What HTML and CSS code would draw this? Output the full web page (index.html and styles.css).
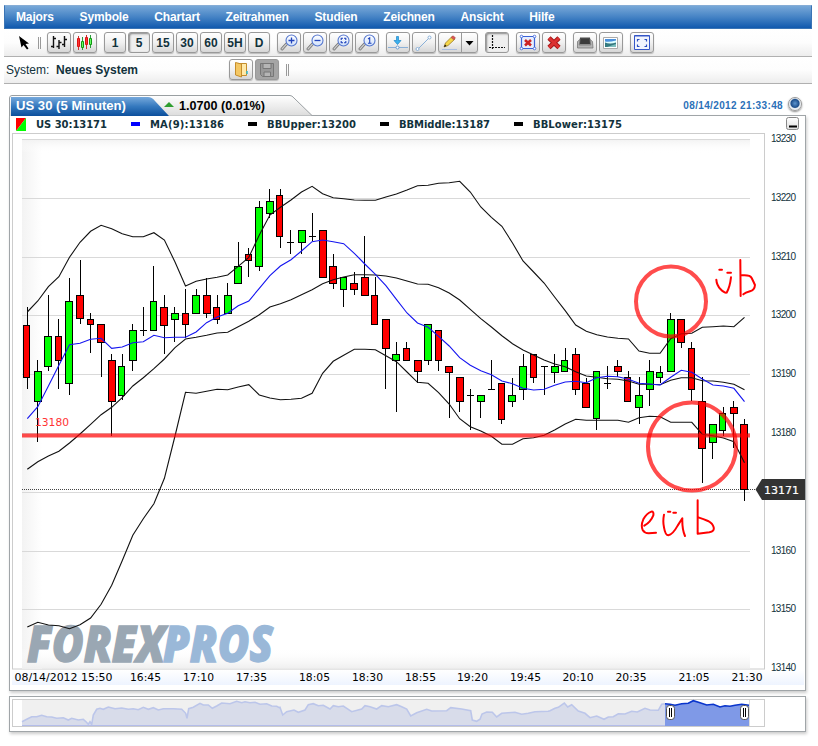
FILE: index.html
```html
<!DOCTYPE html>
<html lang="de">
<head>
<meta charset="utf-8">
<title>US 30 (5 Minuten)</title>
<link rel="stylesheet" href="styles.css">
</head>
<body>
<nav class="menu"><span>Majors</span><span>Symbole</span><span>Chartart</span><span>Zeitrahmen</span><span>Studien</span><span>Zeichnen</span><span>Ansicht</span><span>Hilfe</span></nav>

<div class="bar tools">
  <svg class="cursor" width="12" height="16" viewBox="0 0 12 16"><path d="M1 1L3.500 12.500 5.500 10 9 14.500 10.500 13.500 7.500 9 11 8.500Z" fill="#000"/></svg>
  <i class="grip"></i>
  <div class="group">
    <button class="btn"><svg viewBox="0 0 24 21"><path d="M6.500 4V16M4 14.500H6.500M6.500 6.500H9M12 8V17M9.500 14.500H12M12 10.500H14.500M17.500 4V15M15 12.500H17.500M17.500 7.500H20" stroke="#111" stroke-width="1.400" fill="none"/></svg></button>
    <button class="btn"><svg viewBox="0 0 24 21"><path d="M5.500 4V18M13.500 3V17" stroke="#c33"/><path d="M9.500 5V18M17.500 3V16" stroke="#2a9a3a"/><path d="M4.500 6.500h2v8h-2zM12.500 5.500h2v7h-2z" fill="#f33" stroke="#d11"/><path d="M8.500 9.500h2v6h-2zM16.500 6.500h2v6h-2z" fill="#6f6" stroke="#191"/></svg></button>
  </div>
  <div class="group">
    <button class="btn num">1</button><button class="btn num on">5</button><button class="btn num">15</button><button class="btn num">30</button><button class="btn num">60</button><button class="btn num">5H</button><button class="btn num">D</button>
  </div>
  <div class="group">
    <button class="btn"><svg viewBox="0 0 24 21"><use href="#lens"/><path d="M11.500 8.500h6M14.500 5.500v6" stroke="#24b" stroke-width="1.300"/></svg></button>
    <button class="btn"><svg viewBox="0 0 24 21"><use href="#lens"/><path d="M11.500 8.500h6" stroke="#24b" stroke-width="1.300"/></svg></button>
    <button class="btn"><svg viewBox="0 0 24 21"><use href="#lens"/><path d="M12.200 8V6.200h1.800M15 6.200h1.800v1.800M16.800 9v1.800h-1.800M14 10.800h-1.800v-1.800" fill="none" stroke="#24b" stroke-width="1.100"/></svg></button>
    <button class="btn"><svg viewBox="0 0 24 21"><use href="#lens"/><path d="M13 7l1.700-1.200V11M13 11.200h3.500" fill="none" stroke="#24b" stroke-width="1.100"/></svg></button>
  </div>
  <div class="group">
    <button class="btn"><svg viewBox="0 0 24 21"><path d="M2 15.500H22" stroke="#8ab0d8"/><circle cx="11.500" cy="15.500" r="1.500" fill="#fff" stroke="#6a9bd0"/><path d="M10.500 4.500h2v4h2.500l-3.500 4-3.500-4h2.500z" fill="#3bb0ee" stroke="#1b86c8" stroke-width=".7"/></svg></button>
    <button class="btn"><svg viewBox="0 0 24 21"><path d="M6 17L17 6" stroke="#8ab0d8"/><circle cx="5.500" cy="17" r="1.500" fill="#fff" stroke="#8ab0d8"/><circle cx="17.500" cy="5.500" r="1.500" fill="#fff" stroke="#8ab0d8"/></svg></button>
    <button class="btn wide"><svg class="pen" viewBox="0 0 40 21"><path d="M4 17.500H19" stroke="#a9bde0"/><path d="M6 15L7.500 11 14 4.500 17 7 10 13.500Z" fill="#f5d648" stroke="#9c7a22" stroke-width=".8"/><path d="M13 5.500l2-1.700 2.500 2-1.800 2z" fill="#d55" stroke="#944" stroke-width=".5"/><path d="M6 15l1-2.500 1.500 1.500z" fill="#111"/><path d="M23.500 0V21" stroke="#999"/><path d="M27.500 9h8l-4 4.500z" fill="#000"/></svg></button>
  </div>
  <div class="group"><button class="btn on"><svg viewBox="0 0 24 21"><path d="M7.500 3V18M4 15.500H20" stroke="#111" stroke-width="1.200" stroke-dasharray="2 1"/></svg></button></div>
  <div class="group">
    <button class="btn"><svg viewBox="0 0 24 21"><path d="M5.500 4.500h13v12h-13z" fill="#e7eefc" stroke="#3a62d8" stroke-width="1.200"/><path d="M9 8l6 5.500M15 8L9 13.500" stroke="#c22" stroke-width="2.600"/><g fill="#fff" stroke="#3a62d8" stroke-width=".8"><circle cx="5.500" cy="4.500" r="1.300"/><circle cx="18.500" cy="4.500" r="1.300"/><circle cx="5.500" cy="16.500" r="1.300"/><circle cx="18.500" cy="16.500" r="1.300"/></g></svg></button>
    <button class="btn"><svg viewBox="0 0 24 21"><path d="M7 6l10 9.500M17 6L7 15.500" stroke="#a11717" stroke-width="4.600"/><path d="M7 6l10 9.500M17 6L7 15.500" stroke="#dc3232" stroke-width="3"/></svg></button>
  </div>
  <div class="group">
    <button class="btn"><svg viewBox="0 0 24 21"><path d="M7 5.500h10l1 7H6z" fill="#4a4a4a"/><path d="M4.500 9.500l2.500-2-.8 5.500h11.600L17 7.500l2.500 2 .5 6.500h-15.500z" fill="#b5b5b5" stroke="#777" stroke-width=".8"/><path d="M8 7h8l.8 5H7.200z" fill="#3b3b3b"/></svg></button>
    <button class="btn"><svg viewBox="0 0 24 21"><path d="M4.500 5.500h14v11h-14z" fill="#fff" stroke="#aaa"/><path d="M6 7h11v4H6z" fill="#4a90dc"/><path d="M6 9.500q4 1 11-1V11H6z" fill="#dff"/><path d="M6 10.500q5 2 11 0V15H6z" fill="#357a80"/><path d="M8 15l9-3v3z" fill="#7fc0bf"/></svg></button>
  </div>
  <div class="group"><button class="btn"><svg viewBox="0 0 24 21"><path d="M4.500 3.500h15v14h-15z" fill="#f2f5fd" stroke="#3557c8"/><path d="M4.500 4h15" stroke="#3557c8"/><path d="M7.500 9.500V7.500H9.500M14.500 7.500h2V9.500M16.500 12.500v2h-2M9.500 14.500h-2v-2" fill="none" stroke="#2a4fc0" stroke-width="1.200"/></svg></button></div>
</div>

<div class="bar system">
  <span class="label">System:</span><b>Neues System</b>
  <div class="group">
    <button class="btn"><svg viewBox="0 0 24 21"><path d="M9 4.500h8.500v12H9z" fill="#ffe9a8" stroke="#c48d2c"/><path d="M6.500 3.500l6 1.500v13l-6-2z" fill="#f4c763" stroke="#c48d2c"/><path d="M18 12v3" stroke="#3bc" stroke-width="1.500"/></svg></button>
    <button class="btn off"><svg viewBox="0 0 24 21"><path d="M5.500 4.500h13v13h-11l-2-2z" fill="#999" stroke="#777"/><path d="M8 4.500h8v5H8zM9 13h6.500v4.500H9z" fill="#b5b5b5" stroke="#777"/></svg></button>
  </div>
  <i class="grip"></i>
</div>

<header class="head">
  <div class="tabs">
    <svg viewBox="0 0 306 21" width="306" height="21">
      <defs>
        <linearGradient id="blue" x2="0" y2="1"><stop offset="0" stop-color="#76a9dc"/><stop offset=".5" stop-color="#3478be"/><stop offset="1" stop-color="#0c4f9c"/></linearGradient>
        <linearGradient id="gray" x2="0" y2="1"><stop offset="0" stop-color="#fff"/><stop offset="1" stop-color="#dcdcdc"/></linearGradient>
      </defs>
      <path d="M.5 21V3Q.5 .5 3 .5H281Q283 .5 285 3L303 20.500" fill="url(#gray)" stroke="#9a9fa2"/>
      <path d="M2 21V2H139Q143 2 146 6L160 21Z" fill="url(#blue)"/>
      <path d="M155 12l5-5 5 5z" fill="#2f9e2f"/>
      <text x="7" y="15" class="tab active" textLength="110" lengthAdjust="spacingAndGlyphs">US 30 (5 Minuten)</text>
      <text x="170" y="15" class="tab" textLength="86" lengthAdjust="spacingAndGlyphs">1.0700 (0.01%)</text>
    </svg>
  </div>
  <span class="time">08/14/2012 21:33:48</span><i class="orb"></i>
</header>

<main class="panel chart">
<svg id="chart" viewBox="10 116 795 574" width="795" height="574">
  <defs>
    <linearGradient id="fl"><stop offset="0" stop-color="#f3f3f3"/><stop offset="1" stop-color="#fff"/></linearGradient>
    <linearGradient id="fb" x2="0" y2="1"><stop offset="0" stop-color="#fff" stop-opacity="0"/><stop offset="1" stop-color="#efefef"/></linearGradient>
    <linearGradient id="ft" x2="0" y2="1"><stop offset="0" stop-color="#f1f1f1"/><stop offset="1" stop-color="#fff" stop-opacity="0"/></linearGradient>
    <linearGradient id="ax" x2="0" y2="1"><stop offset="0" stop-color="#fff"/><stop offset="1" stop-color="#eef4ff"/></linearGradient>
    <linearGradient id="mini" x2="0" y2="1"><stop offset="0" stop-color="#fff"/><stop offset="1" stop-color="#ddd"/></linearGradient>
  </defs>
  <rect x="12" y="670" width="792" height="15" fill="url(#ax)"/>
  <rect x="12.500" y="133.500" width="752" height="535.500" fill="#fff" stroke="#ccc"/>
  <rect x="22" y="139" width="20" height="529.500" fill="url(#fl)"/>
  <rect x="22" y="139" width="728" height="14" fill="url(#ft)"/>
  <rect x="22" y="648" width="728" height="20.500" fill="url(#fb)"/>
  <g id="grid"></g>
  <path d="M22 489.500H758" stroke="#444" stroke-dasharray="1 1" shape-rendering="crispEdges"/>
  <g class="brand"><text x="27" y="661.500" textLength="138" lengthAdjust="spacingAndGlyphs" fill="#9aa7b3" stroke="#9aa7b3">FOREX</text><text x="163" y="661.500" textLength="110" lengthAdjust="spacingAndGlyphs" fill="#9ab8d8" stroke="#9ab8d8">PROS</text></g>
  <g id="candles"></g>
  <g id="lines"></g>
  <text class="verd" x="35" y="426" textLength="34" lengthAdjust="spacingAndGlyphs" fill="#f33">13180</text>
  <g fill="none" stroke="#f00" stroke-opacity=".7" stroke-width="4">
    <path d="M22 435.500H750"/><circle cx="671" cy="301.500" r="35"/><circle cx="692" cy="446.500" r="44"/>
  </g>
  <g class="scribble" transform="translate(550 240) scale(.3333)">
    <path d="M508 89h8M532 98h11M499 119Q500 136 512 148T530 158Q540 140 543 112M571 60L572 168M576 106Q600 104 605 114T615 135Q614 150 600 154T580 163"/>
    <path d="M283 857Q302 846 310 826 312 814 304 815 290 820 280 838 272 856 278 870 284 880 296 880L318 878M354 815h7M370 818h8M342 824Q338 845 342 862 346 886 355 886 368 884 383 857L397 835Q396 868 405 888M443 781V881L478 877Q494 874 491 862 488 850 474 843 460 837 447 833"/>
  </g>
  <g class="legend">
    <path d="M16 118H26L16 131Z" fill="#f00"/><path d="M26 118V131H16Z" fill="#0f0"/>
    <path d="M131 122h9v4h-9z" fill="#00f"/><path d="M248 122h9v4h-9zM380 122h9v4h-9zM514 122h9v4h-9z" fill="#000"/>
    <text x="36" y="128" textLength="71">US 30:13171</text><text x="150" y="128" textLength="74">MA(9):13186</text><text x="267" y="128" textLength="89">BBUpper:13200</text><text x="399" y="128" textLength="91">BBMiddle:13187</text><text x="533" y="128" textLength="89">BBLower:13175</text>
  </g>
  <rect x="786.500" y="117.500" width="12" height="12" rx="2" fill="url(#mini)" stroke="#888"/><path d="M789 126.500h8" stroke="#000" stroke-width="2"/>
  <g id="axis"></g>
  <path d="M755.500 489.500L762 479H805V500H762Z" fill="#333"/>
  <text class="verd" x="764" y="493.500" fill="#fff" stroke="#fff" stroke-width=".2" textLength="35" lengthAdjust="spacingAndGlyphs">13171</text>
</svg>
</main>

<section class="panel overview">
<svg id="overview" viewBox="10 697 795 34" width="795" height="34">
  <rect x="12.500" y="699.500" width="752" height="27" fill="#fff" stroke="#ccc"/>
  <rect x="22" y="700" width="643" height="26" fill="#f0f0f0"/>
  <path d="M749.500 700V726" stroke="#ddd"/>
  <g id="history"></g>
  <g fill="#fff" stroke="#555"><rect x="666.500" y="705.500" width="8" height="14" rx="3"/><rect x="740.500" y="705.500" width="8" height="14" rx="3"/></g>
  <path d="M669.500 708v9M671.500 708v9M743.500 708v9M745.500 708v9" stroke="#000"/>
</svg>
</section>

<svg class="defs" width="0" height="0"><defs><linearGradient id="lg" x2="0" y2="1"><stop offset="0" stop-color="#fff"/><stop offset="1" stop-color="#cfe0fb"/></linearGradient><g id="lens"><path d="M9.500 12L5 17" stroke="#777" stroke-width="3" stroke-linecap="round"/><path d="M9.500 12L5 17" stroke="#ccc" stroke-width="1.200" stroke-linecap="round"/><circle cx="14.500" cy="8.500" r="5.500" fill="url(#lg)" stroke="#5577cf" stroke-width="1.100"/></g></defs></svg>
<script src="chart.js"></script>
</body>
</html>
```
FILE: styles.css
```css
* { box-sizing: border-box; }
body { margin: 0; width: 818px; height: 746px; padding: 5px 0 0 4px; background: #fff; overflow: hidden; font: 12px "Liberation Sans", Arial, sans-serif; color: #12323c; }
svg { display: block; }
.menu { display: flex; gap: 25.7px; width: 808px; height: 24px; padding: 0 11px; align-items: center; color: #fff; font-weight: bold; letter-spacing: -.14px; background: linear-gradient(#78a8d8, #4583c5 50%, #1059ae); border: 1px solid #3a74b5; border-top-color: #86add6; }
.bar { display: flex; width: 808px; height: 28px; border-bottom: 1px solid #b0b0b0; background: linear-gradient(#fff, #fdfdfd 50%, #ededed); }
.tools { padding: 3px 0 0; }
.system { height: 27px; padding-top: 2px; }
.cursor { margin: 3px 0 0 14px; }
.grip { width: 3px; height: 12px; margin: 5px 0 0; border-left: 1px solid #999; border-right: 1px solid #999; }
.tools .grip { margin: 5px 6px 0 8px; }
.group { display: flex; gap: 2px; margin-right: 7px; }
.btn { width: 24px; height: 21px; padding: 0; border: 1px solid #999; border-radius: 3px; background: linear-gradient(#fff, #f1f1f1 50%, #d6d6d6); box-shadow: 0 1px 1px #bbb; color: #12323c; font: bold 12px "Liberation Sans", Arial, sans-serif; }
.btn svg { width: 24px; height: 21px; margin: -1px; }
.btn .pen { width: 40px; }
.num { width: 22px; }
.wide { width: 40px; }
.on { box-shadow: inset 1px 1px 2px #888; background: #efefef; }
.off { background: #a5a5a5; }
.system .label { width: 50px; padding: 4px 0 0 2px; }
.system b { width: 175px; padding: 4px 0 0 2px; }
.system .group { margin-right: 3px; }
.system .grip { margin-left: 4px; }
.head { display: flex; width: 802px; height: 20px; margin-top: 11px; padding-left: 5px; align-items: center; }
.tabs { width: 306px; height: 21px; }
.tab { font: bold 12px "Liberation Sans", Arial, sans-serif; fill: #000; }
.active { fill: #fff; }
.time { margin-left: auto; color: #2a70b8; font-weight: bold; font-size: 10px; white-space: nowrap; letter-spacing: .36px; }
.orb { width: 14px; height: 14px; margin: -2px 4px 0 5px; border: 1px solid #999; border-radius: 50%; background: radial-gradient(circle at 50% 45%, #5d95cf 0, #1e4f8c 45%, #e9eef3 58%, #fff 100%); box-shadow: 0 1px 2px #888; }
.panel { width: 797px; margin-left: 5px; border: 1px solid #a0a5a8; background: #fff; box-shadow: 1px 2px 3px #ccc; }
.chart { height: 576px; }
.overview { height: 36px; margin-top: 5px; }
.verd { font: 10px "DejaVu Sans", Verdana, sans-serif; }
.legend text { font: bold 10px "DejaVu Sans", Verdana, sans-serif; fill: #12323c; }
.ylab { font: 10px "Liberation Sans", Arial, sans-serif; fill: #12323c; }
.brand text { font: italic 800 49px "Open Sans", sans-serif; stroke-width: 1.3; }
.scribble { fill: none; stroke: #f00; stroke-width: 6; stroke-linejoin: round; stroke-linecap: round; }
.defs { position: absolute; }
```
FILE: chart.js
```js
const NS = "http://www.w3.org/2000/svg";
function add(parent, tag, attrs, text) {
  const el = document.createElementNS(NS, tag);
  for (const k in attrs) el.setAttribute(k, attrs[k]);
  if (text) el.textContent = text;
  document.getElementById(parent).appendChild(el);
}
const X = i => 27.300 + i * 10.547;

// Horizontal grid and price axis; the current price tag takes the place of 13170
for (let i = 0; i < 10; i++) {
  const y = Math.round(139 + i * 58.800) + .5;
  if (i < 9) add("grid", "path", { d: `M22 ${y}H750`, stroke: "#d9d9d9" });
  if (i !== 6) add("axis", "text", { x: 771, y: y + 2.500, class: "ylab", textLength: 25 }, String(13230 - i * 10));
}

// Time axis: left edge and label
[[14.500, "08/14/2012 15:50"], [130, "16:45"], [183, "17:10"], [236, "17:35"], [299, "18:05"], [352, "18:30"], [405, "18:55"], [457, "19:20"], [510, "19:45"], [562.500, "20:10"], [615.500, "20:35"], [678.500, "21:05"], [731.500, "21:30"]]
  .forEach(([x, t]) => add("axis", "text", { x, y: 681, class: "verd", textLength: t.length > 5 ? 98 : 31, lengthAdjust: "spacingAndGlyphs" }, t));

// direction, high, body top, body bottom, low
const candles = `R 307 325 377 389|G 360 371 401 442|G 295 336 366 371|R 319 336 360 389|G 278 301 383 395|R 260 295 318 324|R 313 319 324 353|R 324 324 342 377|R 354 360 401 436|G 354 366 395 400|G 324 330 360 371|D 307 330 330 336|G 266 301 330 330|R 295 307 325 354|G 307 313 319 342|R 289 313 324 338|G 289 295 313 313|R 278 295 313 318|R 295 307 319 324|G 283 295 313 313|G 242 266 283 283|R 248 254 260 277|G 201 207 266 271|G 189 201 213 218|R 189 195 236 248|D 230 242 242 254|G 230 230 242 254|D 213 236 236 241|R 230 230 277 277|R 254 266 283 289|G 277 277 289 307|R 272 283 289 295|R 236 277 295 295|R 277 295 324 324|R 319 319 348 389|G 342 354 360 412|R 342 348 360 360|R 360 360 371 383|G 324 324 360 365|R 330 330 360 371|R 366 366 372 418|R 377 377 401 412|D 389 395 395 430|G 395 395 401 418|D 360 389 389 389|R 383 383 419 424|G 378 395 401 407|G 354 366 389 400|R 354 354 377 383|D 366 366 366 395|G 354 366 372 383|G 348 360 371 371|R 348 354 389 395|R 378 383 407 407|G 371 371 418 430|D 366 383 383 389|R 360 366 371 377|R 371 377 401 401|G 377 395 407 424|G 360 371 389 406|G 366 372 377 383|G 313 319 371 371|R 319 319 342 348|R 342 348 389 401|R 377 401 448 483|G 424 424 442 459|G 407 413 430 436|R 401 407 413 448|R 419 424 489 501`;
candles.split("|").forEach((row, i) => {
  const [dir, ...v] = row.split(" ");
  const [h, t, b, l] = v.map(Number);
  const x = Math.floor(X(i)) + .5;
  add("candles", "path", { d: `M${x} ${h}V${l}`, stroke: "#000" });
  if (dir === "D") add("candles", "path", { d: `M${x - 3.500} ${t + .5}h7`, stroke: "#000" });
  else add("candles", "rect", { x: Math.round(X(i) - 4) + .5, y: t + .5, width: i % 3 ? 7 : 6, height: b - t, fill: dir === "R" ? "#f00" : "#0f0", stroke: "#000" });
});

const series = {
  upper: "312 301 286.7 276.7 257.3 242.3 231.3 225.3 228.7 233.7 236.7 236.7 232.7 240 262 286 281.3 279 277.3 275 266.3 257.3 235 215 207.3 200 192 186.3 193.7 197.7 198.7 200 200.3 200.3 197 194 190 185.7 185.3 183.3 182.7 181.3 192 207 217.3 226.3 243 261 272 283 297 310.7 325 331.3 334.7 337 338.3 339 351 353.3 353.3 338.7 333.7 333.3 327.3 326.7 326 326.7 317.3",
  middle: "469.3 461.7 456 451.3 443 434 424.3 414.7 407.3 397.7 386 377.7 368.7 359 347.7 339 337.3 335.3 333 332.3 326.7 321.3 314.7 307 303.7 299.7 294.7 289.7 283.7 279.7 277 274.7 274.7 275 276 278 281 284 284.3 287.7 293 300 309.3 318.7 327 335.7 343.7 350 355 360 364 366.7 371.7 376 377.3 378.7 379.3 381 384.3 384.3 384.7 380.3 377.7 377.7 380.7 381 382.3 384.3 389.7",
  lower: "627 622.3 625 625.7 628.7 624.7 618 604.3 585.3 560.7 535.3 518.7 503.7 478.3 436 392.3 393.3 391.3 389.3 389.7 387 384.7 395 398 399.7 399.3 398.3 393.3 373.3 361.3 355.3 349.3 349.3 349.7 355.7 361.7 372 382.3 383.3 392.7 404 418.7 426.7 431 436.3 444.3 444.3 438.7 437.7 435.3 430 424 419.3 420.3 420.3 420.3 420.3 422.3 417.7 416.3 416.7 422.3 422.3 422.3 434.3 435.7 438 441.7 462.7",
  ma: "418.7 406.7 386 365.3 344.7 343.3 339.3 338.3 348.3 347 342.7 341.7 335.3 337.7 337.3 337.3 332 322.7 317 313.3 305.7 301 288.3 275.7 266 259.7 251 241.7 240 241.7 243.7 253.3 264 274.3 285.7 299.3 313 323 327.3 336.3 346 357.7 365.3 370.7 374.7 381 383.7 388.3 390 389.3 385.3 382 381.3 382.7 377.7 376.3 376.7 379.3 383.3 384 385 377.3 370.3 372.3 379 385 386 388.3 401.7"
};
for (const name in series) {
  const points = series[name].split(" ").map((y, i) => `${X(i).toFixed(1)},${y}`).join(" ");
  add("lines", "polyline", { points, fill: "none", stroke: name === "ma" ? "#1414f0" : "#111", "stroke-width": 1.1 });
}

// Overview history, in thirds of a pixel from each segment's origin
const parts = [
  [0, 440, "66,845 80,838 95,830 110,830 125,826 140,830 155,831 170,835 190,833 205,840 215,835 235,840 250,838 258,845 265,853 270,845 275,853 280,825 290,808 300,805 310,808 325,801 345,806 365,804 385,808 400,806 415,809 430,802 445,808 460,803 475,810 490,806 520,806 545,808 557,820 561,835 566,806 580,802 600,790 610,795 625,795 637,805 650,798 665,789 690,791 710,784 725,788 735,785 750,788 765,787 780,793 800,791 815,798 830,799 838,803"],
  [280, 660, "0,142 8,165 20,155 42,150 55,157 75,150 85,134 100,131 115,137 130,136 150,147 160,137 175,140 190,138 215,155 245,147 255,137 270,140 290,147 305,137 325,140 350,134 365,140 380,147 392,168 410,158 440,148 455,153 500,152 512,143 545,147 572,152 577,180 590,184 600,178 606,162 620,156 637,157 650,171 665,160 685,158 705,157 725,163 745,160 765,155 805,154"],
  [550, 660, "0,152 15,145 25,142 43,129 53,141 65,134 85,153 105,160 120,173 140,168 162,178 175,171 190,170 205,161 225,162 245,154 262,156 285,145 300,150 325,151 335,133 345,131"]
];
const selected = [[550, 660, "345,131 360,133 375,136 395,131 415,130 430,122 450,128 470,135 490,133 510,141 525,137 540,139 555,136 575,133 597,136"]];
const trace = list => list.flatMap(([ox, oy, p]) => p.split(" ").map(q => {
  const [x, y] = q.split(",").map(Number);
  return (ox + x / 3).toFixed(1) + "," + (oy + y / 3).toFixed(1);
})).join(" ");
function area(list, x0, x1, fill, stroke) {
  const p = trace(list);
  add("history", "polygon", { points: `${x0},726 ${p} ${x1},726`, fill });
  add("history", "polyline", { points: p, fill: "none", stroke, "stroke-width": 1.600 });
}
area(parts, 22, 665, "#d8dcea", "#bcc6ea");
add("history", "path", { d: "M22 725.500H665", stroke: "#b4bdea" });
area(selected, 665, 749, "#7f99e7", "#0a35cc");
```
